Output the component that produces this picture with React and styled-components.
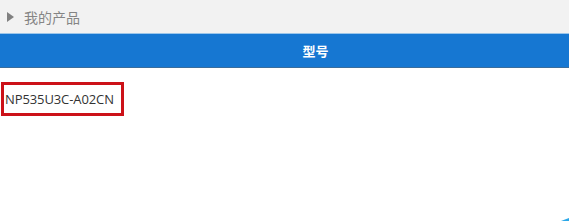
import * as React from "react"
import styled, { createGlobalStyle } from "styled-components"

const Global = createGlobalStyle`
    body {
        margin:0;
        background:#fff;
        font-family:"Open Sans", "Noto Sans CJK SC", sans-serif;
    }
`

const Page = styled.div`
    width:569px;
    height:221px;
    position:relative;
`

const TitleBar = styled.div`
    height:33px;
    background:#f2f2f2;
    display:flex;
    align-items:center;
    padding-left:7px;
    gap:10px;
    border-bottom:1px solid #9cc6ea;
`

const Arrow = styled.span`
    width:0;
    height:0;
    border-top:5px solid transparent;
    border-bottom:5px solid transparent;
    border-left:7px solid #808080;
`

const Title = styled.span`
    font-size:14px;
    color:#858585;
`

const HeadRow = styled.div`
    height:33px;
    background:#1677d2;
    border-bottom:1px solid #3a6d9c;
    display:flex;
    align-items:center;
    justify-content:center;
    color:#fff;
    font-size:13px;
    font-weight:bold;
    padding-left:62px;
`

const Body = styled.div`
    padding:14px 0 0 1px;
`

const Cell = styled.div`
    display:inline-flex;
    align-items:center;
    width:116px;
    height:28px;
    border:3px solid #cc1118;
    padding-left:1px;
    font-size:13px;
    color:#333;
    letter-spacing:-0.1px;
`

const Corner = styled.div`
    position:absolute;
    right:0;
    bottom:0;
    width:0;
    height:0;
    border-left:8px solid transparent;
    border-bottom:3px solid #2ba8e8;
`

export default function App() {
    return (
        <Page>
            <Global />
            <TitleBar>
                <Arrow />
                <Title>我的产品</Title>
            </TitleBar>
            <HeadRow>型号</HeadRow>
            <Body>
                <Cell>NP535U3C-A02CN</Cell>
            </Body>
            <Corner />
        </Page>
    )
}
